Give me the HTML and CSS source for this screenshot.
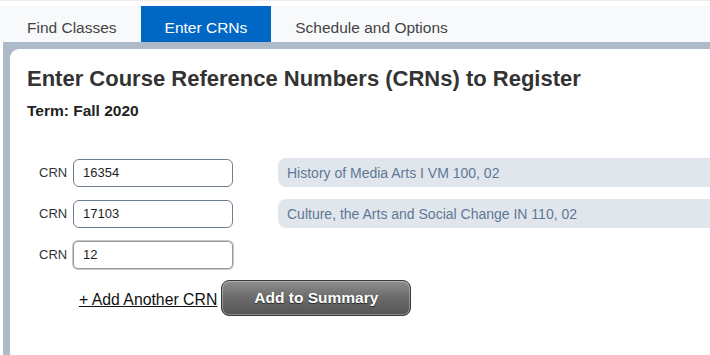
FILE: index.html
```html
<!DOCTYPE html>
<html lang="en">
<head>
  <meta charset="UTF-8" />
  <title>Enter CRNs - Registration</title>
  <link rel="stylesheet" href="styles.css">
</head>
<body>

  <div class="page">
    <nav class="tabs">
      <a href="#" class="tab">Find Classes</a>
      <a href="#" class="tab active">Enter CRNs</a>
      <a href="#" class="tab">Schedule and Options</a>
    </nav>

    <div class="frame">
      <main class="panel">
        <h1>Enter Course Reference Numbers (CRNs) to Register</h1>
        <p class="term">Term: Fall 2020</p>

        <form class="crn-form">
          <div class="crn-row">
            <label for="crn1">CRN</label>
            <input type="text" id="crn1" value="16354" />
            <div class="course">History of Media Arts I VM 100, 02</div>
          </div>
          <div class="crn-row">
            <label for="crn2">CRN</label>
            <input type="text" id="crn2" value="17103" />
            <div class="course">Culture, the Arts and Social Change IN 110, 02</div>
          </div>
          <div class="crn-row">
            <label for="crn3">CRN</label>
            <input type="text" id="crn3" class="focused" value="12" />
          </div>

          <div class="actions">
            <a href="#" class="add-link">+ Add Another CRN</a>
            <button type="button" class="summary-btn">Add to Summary</button>
          </div>
        </form>
      </main>
    </div>
  </div>

</body>
</html>
```

FILE: styles.css
```css
  body {
    margin: 0;
    font-family: "Liberation Sans", Arial, sans-serif;
    background: white;
    overflow: hidden;
  }

  .page {
    border-top: 1px solid #ececec;
    padding-top: 5px;
    height: 349px;
    display: flex;
    flex-direction: column;
  }

  .tabs {
    display: flex;
    background-color: #f7f9fb;
    height: 36px;
    padding-left: 3px;
  }

  .tab {
    display: flex;
    align-items: flex-end;
    padding: 0 24px 5px;
    font-size: 15.5px;
    color: #444;
    text-decoration: none;
  }

  .tab.active {
    background-color: #0067c5;
    color: white;
  }

  .frame {
    flex: 1;
    margin-left: 3px;
    padding: 7px 0 0 7px;
    background-color: #adbac8;
    display: flex;
  }

  .panel {
    flex: 1;
    background: white;
    border-top-left-radius: 9px;
    padding: 17px 0 0 17px;
    overflow: hidden;
  }

  .panel h1 {
    margin: 0;
    font-size: 22px;
    line-height: 26px;
    color: #333;
  }

  .term {
    margin: 10px 0 0;
    font-size: 15.5px;
    font-weight: bold;
    color: #222;
  }

  .crn-form {
    margin-top: 38px;
    padding-left: 12px;
  }

  .crn-row {
    display: flex;
    align-items: center;
    height: 29px;
    margin-bottom: 12px;
  }

  .crn-row label {
    width: 34px;
    font-size: 13px;
    color: #333;
  }

  .crn-row input {
    box-sizing: border-box;
    width: 160px;
    height: 28px;
    padding: 0 9px;
    border: 1px solid #6e7f91;
    border-radius: 6px;
    font-family: inherit;
    font-size: 13px;
    color: #222;
    outline: none;
  }

  .crn-row input.focused {
    border-color: #9a9a9a;
    box-shadow: 0 0 0 1px #c8c8c8;
    border-radius: 5px;
  }

  .course {
    flex: 1;
    margin-left: 45px;
    margin-right: -12px;
    height: 29px;
    display: flex;
    align-items: center;
    padding-left: 9px;
    background-color: #e1e6ed;
    border-radius: 8px;
    font-size: 14px;
    color: #5e7894;
  }

  .actions {
    display: flex;
    align-items: center;
    margin-top: -1px;
    padding-left: 40px;
  }

  .add-link {
    font-size: 15.8px;
    color: #111;
    text-decoration: underline;
    margin-top: 3px;
  }

  .summary-btn {
    width: 190px;
    height: 36px;
    margin-left: 4px;
    border: 1px solid #3a3a3a;
    border-radius: 8px;
    background: linear-gradient(#8e8e8e, #6a6a6a 50%, #555);
    box-shadow: inset 0 0 0 1px rgba(255,255,255,0.3);
    color: white;
    font-family: inherit;
    font-size: 15.5px;
    font-weight: bold;
    text-shadow: 0 1px 1px #222;
    cursor: pointer;
  }
```
